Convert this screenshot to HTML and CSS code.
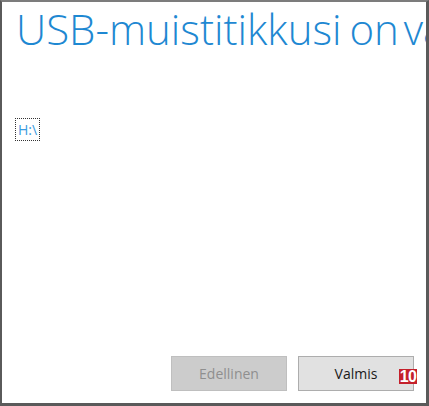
FILE: index.html
```html
<!DOCTYPE html>
<html lang="fi">
<head>
<meta charset="utf-8">
<link rel="stylesheet" href="styles.css">
</head>
<body>
<div class="frame">
  <h1 class="title">USB-muistitikkusi on <span class="tail">valmis</span></h1>
  <div class="drives">
    <span class="drive">H:\</span>
  </div>
  <div class="footer">
    <button class="btn btn-disabled">Edellinen</button>
    <button class="btn btn-primary">Valmis<span class="badge">10</span></button>
  </div>
</div>
</body>
</html>
```
FILE: styles.css
```css
* { box-sizing: border-box; }
html, body { margin: 0; padding: 0; background: #fff; }
.frame {
  width: 429px;
  height: 406px;
  border-top: 2px solid #7c7c7c;
  border-left: 2px solid #5a5a5a;
  border-right: 3px solid #5a5a5a;
  border-bottom: 3px solid #5a5a5a;
  display: flex;
  flex-direction: column;
  overflow: hidden;
  font-family: "Open Sans", "Noto Sans", sans-serif;
}
.title {
  margin: 1px 0 0 14px;
  font-weight: 300;
  font-size: 42px;
  line-height: 52px;
  color: #1e88d2;
  white-space: nowrap;
  letter-spacing: 0;
  word-spacing: -3px;
}
.title .tail {
  margin-left: -3px;
}
.drives {
  margin: 63px 0 0 13px;
}
.drive {
  display: inline-block;
  border: 1px dotted #333;
  padding: 2px 2px;
  font-size: 14px;
  line-height: 17px;
  color: #3a9be0;
}
.footer {
  margin-top: auto;
  display: flex;
  justify-content: flex-end;
  gap: 11px;
  padding: 0 12px 12px 0;
}
.btn {
  position: relative;
  width: 116px;
  height: 35px;
  font-family: "Open Sans", "Noto Sans", sans-serif;
  font-size: 14px;
  padding: 0;
}
.btn-disabled {
  background: #cccccc;
  border: 1px solid #bfbfbf;
  color: #8f8f8f;
}
.btn-primary {
  background: #e1e1e1;
  border: 1px solid #adadad;
  color: #1a1a1a;
}
.badge {
  position: absolute;
  right: -4px;
  top: 12px;
  background: #c4202b;
  color: #fff;
  font-family: "Liberation Sans", Arial, sans-serif;
  font-weight: bold;
  font-size: 16px;
  line-height: 15px;
  padding: 0 1px;
  letter-spacing: -0.8px;
}
```
